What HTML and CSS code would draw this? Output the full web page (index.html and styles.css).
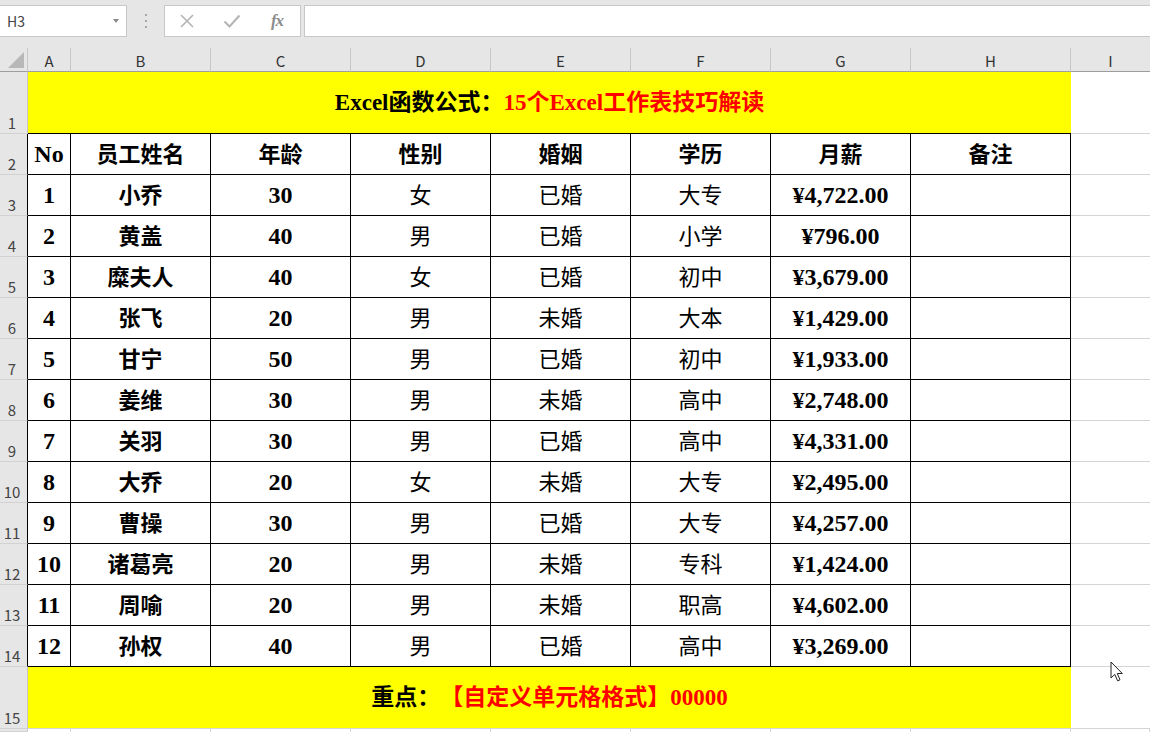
FILE: index.html
```html
<!DOCTYPE html>
<html lang="zh-CN">
<head>
<meta charset="utf-8">
<title>Excel</title>
<link rel="stylesheet" href="styles.css">
</head>
<body>
<div class="toolbar">
  <div class="namebox"><span>H3</span><span class="dd"></span></div>
  <div class="grip"><i></i><i></i><i></i></div>
  <div class="fxbox">
    <svg class="ic" width="18" height="18" viewBox="0 0 18 18"><path d="M3 3 L15 15 M15 3 L3 15" stroke="#b4b4b4" stroke-width="1.6" fill="none"/></svg>
    <svg class="ic" width="18" height="18" viewBox="0 0 18 18"><path d="M1.5 9.5 L6.5 14.5 L16.5 3.5" stroke="#b4b4b4" stroke-width="2" fill="none"/></svg>
    <span class="fx">fx</span>
  </div>
  <div class="formula"></div>
</div>

<div class="sheet">
  <div class="corner"><span class="tri"></span></div>
  <div class="ch">A</div><div class="ch">B</div><div class="ch">C</div><div class="ch">D</div><div class="ch">E</div><div class="ch">F</div><div class="ch">G</div><div class="ch">H</div><div class="ch last">I</div>

  <div class="rh">1</div>
  <div class="title"><span class="k">Excel函数公式：</span><span class="r">15个Excel工作表技巧解读</span></div>
  <div class="g"></div>

  <div class="rh edge">2</div>
  <div class="c d">No</div><div class="c">员工姓名</div><div class="c">年龄</div><div class="c">性别</div><div class="c">婚姻</div><div class="c">学历</div><div class="c">月薪</div><div class="c">备注</div><div class="g"></div>

  <div class="rh edge">3</div>
  <div class="c d">1</div><div class="c">小乔</div><div class="c d">30</div><div class="c n">女</div><div class="c n">已婚</div><div class="c n">大专</div><div class="c d">¥4,722.00</div><div class="c"></div><div class="g"></div>

  <div class="rh edge">4</div>
  <div class="c d">2</div><div class="c">黄盖</div><div class="c d">40</div><div class="c n">男</div><div class="c n">已婚</div><div class="c n">小学</div><div class="c d">¥796.00</div><div class="c"></div><div class="g"></div>

  <div class="rh edge">5</div>
  <div class="c d">3</div><div class="c">糜夫人</div><div class="c d">40</div><div class="c n">女</div><div class="c n">已婚</div><div class="c n">初中</div><div class="c d">¥3,679.00</div><div class="c"></div><div class="g"></div>

  <div class="rh edge">6</div>
  <div class="c d">4</div><div class="c">张飞</div><div class="c d">20</div><div class="c n">男</div><div class="c n">未婚</div><div class="c n">大本</div><div class="c d">¥1,429.00</div><div class="c"></div><div class="g"></div>

  <div class="rh edge">7</div>
  <div class="c d">5</div><div class="c">甘宁</div><div class="c d">50</div><div class="c n">男</div><div class="c n">已婚</div><div class="c n">初中</div><div class="c d">¥1,933.00</div><div class="c"></div><div class="g"></div>

  <div class="rh edge">8</div>
  <div class="c d">6</div><div class="c">姜维</div><div class="c d">30</div><div class="c n">男</div><div class="c n">未婚</div><div class="c n">高中</div><div class="c d">¥2,748.00</div><div class="c"></div><div class="g"></div>

  <div class="rh edge">9</div>
  <div class="c d">7</div><div class="c">关羽</div><div class="c d">30</div><div class="c n">男</div><div class="c n">已婚</div><div class="c n">高中</div><div class="c d">¥4,331.00</div><div class="c"></div><div class="g"></div>

  <div class="rh edge">10</div>
  <div class="c d">8</div><div class="c">大乔</div><div class="c d">20</div><div class="c n">女</div><div class="c n">未婚</div><div class="c n">大专</div><div class="c d">¥2,495.00</div><div class="c"></div><div class="g"></div>

  <div class="rh edge">11</div>
  <div class="c d">9</div><div class="c">曹操</div><div class="c d">30</div><div class="c n">男</div><div class="c n">已婚</div><div class="c n">大专</div><div class="c d">¥4,257.00</div><div class="c"></div><div class="g"></div>

  <div class="rh edge">12</div>
  <div class="c d">10</div><div class="c">诸葛亮</div><div class="c d">20</div><div class="c n">男</div><div class="c n">未婚</div><div class="c n">专科</div><div class="c d">¥1,424.00</div><div class="c"></div><div class="g"></div>

  <div class="rh edge">13</div>
  <div class="c d">11</div><div class="c">周喻</div><div class="c d">20</div><div class="c n">男</div><div class="c n">未婚</div><div class="c n">职高</div><div class="c d">¥4,602.00</div><div class="c"></div><div class="g"></div>

  <div class="rh edge">14</div>
  <div class="c d">12</div><div class="c">孙权</div><div class="c d">40</div><div class="c n">男</div><div class="c n">已婚</div><div class="c n">高中</div><div class="c d">¥3,269.00</div><div class="c"></div><div class="g"></div>

  <div class="rh">15</div>
  <div class="foot"><span class="k">重点：</span><span class="r">【自定义单元格格式】00000</span></div>
  <div class="g"></div>

  <div class="rh"></div>
  <div class="e"></div><div class="e"></div><div class="e"></div><div class="e"></div><div class="e"></div><div class="e"></div><div class="e"></div><div class="e"></div><div class="e"></div>
</div>

<svg class="cursor" width="14" height="22" viewBox="0 0 14 22"><path d="M1 1 L1 17 L4.8 13.4 L7.6 19.8 L10 18.8 L7.3 12.5 L12.3 12.5 Z" fill="#fff" stroke="#222" stroke-width="1" stroke-linejoin="round"/></svg>
</body>
</html>
```

FILE: styles.css
```css
html, body {
  margin: 0;
  padding: 0;
}
body {
  width: 1150px;
  height: 732px;
  overflow: hidden;
  background: #ffffff;
  font-family: "Noto Sans CJK SC", "Liberation Sans", sans-serif;
  position: relative;
}

/* ---------- formula bar ---------- */
.toolbar {
  display: flex;
  align-items: flex-start;
  height: 48px;
  box-sizing: border-box;
  padding-top: 5px;
  background: #e6e6e6;
}
.namebox {
  width: 127px;
  height: 32px;
  box-sizing: border-box;
  background: #fff;
  border: 1px solid #c8c8c8;
  border-left: none;
  display: flex;
  align-items: center;
  justify-content: space-between;
  padding: 0 7px 0 7px;
  font-size: 14px;
  color: #444;
}
.dd {
  width: 0;
  height: 0;
  border-left: 3.5px solid transparent;
  border-right: 3.5px solid transparent;
  border-top: 4px solid #8a8a8a;
}
.grip {
  width: 37px;
  height: 32px;
  display: flex;
  flex-direction: column;
  align-items: center;
  justify-content: center;
  gap: 4px;
}
.grip i {
  display: block;
  width: 2px;
  height: 2px;
  background: #a6a6a6;
}
.fxbox {
  width: 137px;
  height: 32px;
  box-sizing: border-box;
  background: #fff;
  border: 1px solid #c8c8c8;
  display: flex;
  align-items: center;
  padding-left: 13px;
  gap: 27px;
}
.ic {
  display: block;
  flex: none;
}
.fx {
  width: 18px;
  text-align: center;
  font-family: "Liberation Serif", serif;
  font-style: italic;
  font-weight: bold;
  font-size: 17px;
  color: #8c8c8c;
  letter-spacing: -1px;
}
.formula {
  flex: 1;
  margin-left: 3px;
  height: 32px;
  box-sizing: border-box;
  background: #fff;
  border: 1px solid #c8c8c8;
  border-right: none;
}

/* ---------- grid ---------- */
.sheet {
  display: grid;
  grid-template-columns: 28px 43px repeat(6, 140px) 160px 1fr;
  grid-template-rows: 24px 62px repeat(13, 41px) 62px 1fr;
  height: 684px;
}
.sheet > div {
  box-sizing: border-box;
  display: flex;
  align-items: center;
  justify-content: center;
  min-width: 0;
}
.corner {
  background: #e6e6e6;
  border-right: 1px solid #c6c6c6;
  border-bottom: 1px solid #9e9e9e;
  position: relative;
}
.tri {
  position: absolute;
  left: 8px;
  top: 4px;
  width: 16px;
  height: 16px;
  background: #b8b8b8;
  clip-path: polygon(100% 0, 100% 100%, 0 100%);
}
.ch {
  background: #e6e6e6;
  border-right: 1px solid #c6c6c6;
  border-bottom: 1px solid #9e9e9e;
  font-size: 15px;
  color: #333;
  padding-top: 2px;
}
.ch.last {
  border-right: none;
}
.sheet > .rh {
  background: #e6e6e6;
  border-right: 1px solid #c6c6c6;
  border-bottom: 1px solid #d2d2d2;
  font-size: 15px;
  color: #444;
  align-items: flex-end;
  justify-content: center;
  padding-right: 3px;
  padding-bottom: 0;
  line-height: 20px;
}
.sheet > .rh.edge {
  border-right-color: #000;
}
.sheet > .title, .sheet > .foot {
  grid-column: span 8;
  background: #ffff00;
  font-family: "Liberation Serif", "Noto Sans CJK SC", serif;
  font-weight: bold;
  font-size: 23px;
  padding-bottom: 5px;
}
.title {
  border-bottom: 1px solid #000;
}
.foot {
  border-bottom: 1px solid #d4d4d4;
}
.k { color: #000; }
.r { color: #ff0000; }
.sheet > .c {
  border-right: 1px solid #000;
  border-bottom: 1px solid #000;
  font-family: "Liberation Serif", "Noto Sans CJK SC", serif;
  font-weight: bold;
  font-size: 22px;
  color: #000;
  padding-bottom: 4px;
}
.sheet > .c.d {
  font-size: 24px;
  padding-bottom: 0;
}
.sheet > .c.n {
  font-weight: normal;
}
.g {
  border-bottom: 1px solid #d4d4d4;
}
.e {
  border-right: 1px solid #d4d4d4;
}

.cursor {
  position: absolute;
  left: 1110px;
  top: 661px;
}
```
